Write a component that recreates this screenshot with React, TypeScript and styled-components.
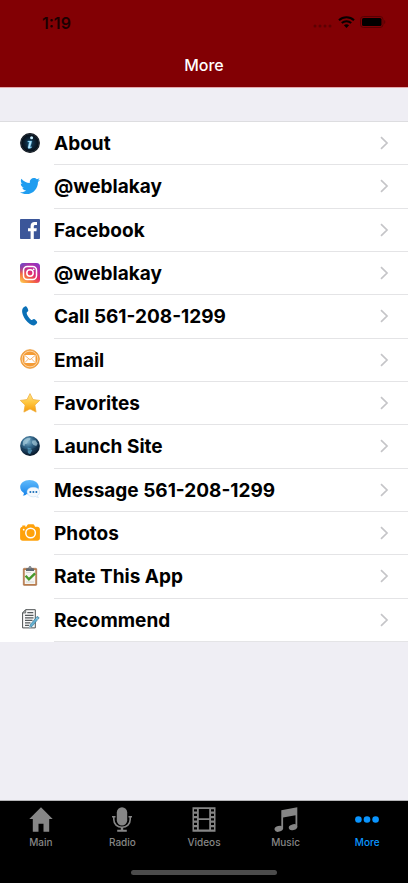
import React from 'react';
import styled, { createGlobalStyle } from 'styled-components';
import { FaTwitter } from 'react-icons/fa';

const GlobalStyle = createGlobalStyle`
  * { box-sizing: border-box; }
  body {
    margin: 0;
    background: #efeef4;
    font-family: Inter, "Liberation Sans", sans-serif;
    color: #000;
  }
`;

const Screen = styled.div`
  min-height: 100vh;
  display: flex;
  flex-direction: column;
  background: #efeef4;
`;

const Header = styled.header`
  background: #820004;
  border-bottom: 1px solid #e3a9ad;
`;

const StatusBar = styled.div`
  display: flex;
  align-items: center;
  justify-content: space-between;
  height: 44px;
  padding: 0 22px 0 42px;
`;

const Clock = styled.time`
  padding-top: 2px;
  font-size: 16px;
  line-height: 20px;
  font-weight: 600;
  color: #1c0001;
`;

const StatusIcons = styled.div`
  display: flex;
  align-items: center;
  gap: 5px;
  svg { display: block; }
`;

const Title = styled.h1`
  margin: 0;
  padding: 10px 0 11px;
  font-size: 16px;
  line-height: 22px;
  font-weight: 500;
  text-align: center;
  color: #fff;
`;

const Content = styled.main`
  flex: 1;
  padding-top: 33px;
`;

const List = styled.ul`
  margin: 0;
  padding: 0;
  list-style: none;
  display: grid;
  grid-auto-rows: 1fr;
  min-height: 521px;
  background: #fff;
  border-top: 1px solid #dddde0;
`;

const Item = styled.li`
  display: flex;
`;

const RowLink = styled.a`
  flex: 1;
  display: flex;
  align-items: stretch;
  gap: 14px;
  padding-left: 20px;
  color: inherit;
  text-decoration: none;
`;

const IconBox = styled.span`
  display: flex;
  align-items: center;
  padding-bottom: 2px;
  svg { display: block; }
`;

const RowBody = styled.span`
  flex: 1;
  display: flex;
  align-items: center;
  justify-content: space-between;
  padding-right: 19px;
  border-bottom: 1px solid #e4e4e6;
`;

const RowLabel = styled.span`
  padding-top: 2px;
  font-size: 19px;
  line-height: 24px;
  font-weight: 700;
`;

const TabBar = styled.footer`
  background: #000;
  border-top: 1px solid #b5b5b8;
`;

const Tabs = styled.nav`
  display: grid;
  grid-template-columns: repeat(5, 1fr);
  padding-top: 6px;
`;

const Tab = styled.button<{ $active?: boolean }>`
  display: flex;
  flex-direction: column;
  align-items: center;
  gap: 3px;
  margin: 0;
  padding: 0;
  border: 0;
  background: none;
  font: inherit;
  font-size: 10px;
  line-height: 14px;
  font-weight: 500;
  color: ${(p) => (p.$active ? '#0a95ff' : '#868686')};
  svg { display: block; }
`;

const HomeIndicator = styled.div`
  width: 146px;
  height: 5px;
  margin: 21px auto 8px;
  border-radius: 3px;
  background: #4b4b4b;
`;

const InfoIcon = () => (
  <svg width="20" height="20" viewBox="0 0 20 20">
    <defs>
      <radialGradient id="info" cx=".5" cy=".5" r=".5">
        <stop offset="0" stopColor="#164765" />
        <stop offset=".55" stopColor="#0b1f30" />
        <stop offset="1" stopColor="#05080d" />
      </radialGradient>
    </defs>
    <circle cx="10" cy="10" r="9.9" fill="url(#info)" />
    <circle cx="10" cy="10" r="9" fill="none" stroke="#40515e" strokeWidth=".5" />
    <circle cx="11.6" cy="4.8" r="1.5" fill="#c9efff" />
    <path d="M8 8.100h3.900l-1.700 6.200 1.600-.6-.3.900c-1.300 1-3.900 1.600-3.500-.6L9.300 9H7.700z" fill="#b9e6fb" stroke="#4fb4e2" strokeWidth=".4" />
  </svg>
);

const FacebookIcon = () => (
  <svg width="20" height="20" viewBox="0 0 20 20">
    <rect width="20" height="20" rx=".8" fill="#3b5699" />
    <path d="M10.600 20v-7.700H8V9.200h2.600V7c0-2.700 1.600-4 4-4l2.400.1V6h-1.600c-1.300 0-1.600.6-1.600 1.500v1.700h3l-.4 3.100h-2.600V20z" fill="#fff" />
  </svg>
);

const InstagramIcon = () => (
  <svg width="20" height="20" viewBox="0 0 20 20">
    <defs>
      <linearGradient id="ig" x1=".15" y1="1" x2=".85" y2="0">
        <stop offset="0" stopColor="#fdc34f" />
        <stop offset=".25" stopColor="#f6733f" />
        <stop offset=".52" stopColor="#e12a6f" />
        <stop offset=".78" stopColor="#b42ea6" />
        <stop offset="1" stopColor="#8a36c4" />
      </linearGradient>
      <radialGradient id="igCorner" cx="0" cy="0" r=".55">
        <stop offset="0" stopColor="#5a4fd6" />
        <stop offset="1" stopColor="#5a4fd6" stopOpacity="0" />
      </radialGradient>
    </defs>
    <rect width="20" height="20" rx="3.5" fill="url(#ig)" />
    <rect width="20" height="20" rx="3.5" fill="url(#igCorner)" />
    <g fill="none" stroke="#fff" strokeWidth="1.5">
      <rect x="3.5" y="3.5" width="13" height="13" rx="3.8" />
      <circle cx="10" cy="10" r="3.2" />
    </g>
    <circle cx="13.700" cy="6.300" r=".9" fill="#fff" />
  </svg>
);

const PhoneIcon = () => (
  <svg width="20" height="20" viewBox="0 0 20 20">
    <path d="M3.300 1.800C4.300.8 5.500.2 6.300.400c.9.500 1.900 2.800 2 4 .1.900-1.900 1.700-1.700 2.700.5 2.500 2.500 5.400 4.600 6.900.9.500 2-1.300 2.900-.9 1.200.5 2.900 2.200 3.100 3.200.1 1-1.700 2.900-3.300 3.100-2.400.2-6-2.400-8.200-5.300C3.400 11 1.500 6.500 2.300 3.600c.2-.8.500-1.300 1-1.800z" fill="#0a70b7" />
  </svg>
);

const EmailIcon = () => (
  <svg width="20" height="20" viewBox="0 0 20 20">
    <circle cx="10" cy="10" r="9.300" fill="#f49b35" stroke="#eda044" />
    <circle cx="10" cy="10" r="7.900" fill="none" stroke="#ffe4c0" strokeWidth=".8" />
    <rect x="4.500" y="6" width="11" height="8" rx=".6" fill="#fff" />
    <path d="M4.800 6.400 10 10.800l5.200-4.400M4.800 13.700l3.700-3.900m6.700 3.900-3.700-3.900" fill="none" stroke="#f0a04b" strokeWidth=".8" />
  </svg>
);

const StarIcon = () => (
  <svg width="20" height="20" viewBox="0 0 20 20">
    <defs>
      <linearGradient id="star" x1="0" y1="0" x2="0" y2="1">
        <stop offset="0" stopColor="#ffe48a" />
        <stop offset=".5" stopColor="#ffc53d" />
        <stop offset="1" stopColor="#f59a0c" />
      </linearGradient>
    </defs>
    <path d="m10 .6 3 5.900 6.700.900-4.800 4.700 1.200 7-6.100-3.200L3.900 19.100l1.200-7L.3 7.400 7 6.500z" fill="url(#star)" stroke="#eeab37" strokeWidth=".7" strokeLinejoin="round" />
  </svg>
);

const GlobeIcon = () => (
  <svg width="20" height="20" viewBox="0 0 20 20">
    <defs>
      <radialGradient id="globe" cx=".4" cy=".28" r=".7">
        <stop offset="0" stopColor="#83b4cd" />
        <stop offset=".4" stopColor="#35698c" />
        <stop offset=".8" stopColor="#12304b" />
        <stop offset="1" stopColor="#0a1a2b" />
      </radialGradient>
    </defs>
    <circle cx="10" cy="10" r="9.900" fill="url(#globe)" />
    <path d="M3 5.500C4.800 2.700 8 1.400 10.600 2l-.7 2.200-2.100.8-.6 2.500-2.300.7-.5 2-1.700-1.300zM12.300 4.500l3.200-.3 2.200 3.500-1.500 2.300-2.700-.9-1.500-2z" fill="#b2d5e4" opacity=".65" />
    <path d="m7.500 11.500 3.600 1 1 2-2 3.700-2.200-1.300z" fill="#5ba4c6" opacity=".75" />
    <path d="M1.400 11.500c2.200 3.200 10.400 3.800 17.200-1.100" fill="none" stroke="#071a2b" strokeWidth=".6" opacity=".5" />
  </svg>
);

const MessageIcon = () => (
  <svg width="20" height="20" viewBox="0 0 20 20">
    <defs>
      <linearGradient id="bubble" x1="0" y1="0" x2="0" y2="1">
        <stop offset="0" stopColor="#61bbfb" />
        <stop offset="1" stopColor="#1683ea" />
      </linearGradient>
    </defs>
    <path d="M9.500 1C14.600 1 18.800 4 18.800 8s-4.200 7.300-9.300 7.300c-1 0-1.900-.1-2.800-.3-1 1-2.500 1.700-4.100 1.600.9-.7 1.300-1.600 1.300-2.700C1.600 12.600.2 10.500.2 8c0-4 4.200-7 9.300-7z" fill="url(#bubble)" />
    <path d="M13.300 8.300c3.600 0 6.400 2 6.400 4.700 0 1.500-.9 2.800-2.200 3.700.1.800.5 1.300 1 1.800-1.200 0-2.200-.4-2.900-1-.7.200-1.500.3-2.300.3-3.500 0-6.300-2.100-6.300-4.800s2.800-4.700 6.300-4.700z" fill="#f5f9fd" stroke="#a8cff0" strokeWidth=".4" />
    <g fill="#176eb9"><circle cx="10.400" cy="13" r="1" /><circle cx="13.400" cy="13" r="1" /><circle cx="16.400" cy="13" r="1" /></g>
  </svg>
);

const CameraIcon = () => (
  <svg width="20" height="20" viewBox="0 0 20 20">
    <path d="M2.300 2.600h3v1.100h1l1-1.700c.3-.5.700-.7 1.200-.7h4.600c.5 0 .9.300 1.100.7l.9 1.700h2.200c1.500 0 2.600 1.100 2.600 2.600v8.900c0 1.500-1.100 2.500-2.600 2.500H2.700C1.200 17.700.1 16.700.1 15.200V6.300c0-1.300.9-2.300 2.200-2.600z" fill="#ffa20b" />
    <circle cx="10.600" cy="10" r="4.800" fill="none" stroke="#fff" strokeWidth="1.500" />
    <circle cx="3.700" cy="6.700" r=".9" fill="#fff" />
  </svg>
);

const ClipboardIcon = () => (
  <svg width="20" height="20" viewBox="0 0 20 20">
    <rect x="3.200" y="2.200" width="13.600" height="17.300" rx="1" fill="#b97b4a" stroke="#94603a" strokeWidth=".4" />
    <path d="M4.700 4h10.600v14H4.700z" fill="#f5f5f2" />
    <path d="M6 4.900V3.100c0-.6.500-.9 1-.9h1.500C8.500.7 9 .3 10 .3s1.500.4 1.500 1.900H13c.5 0 1 .3 1 .9v1.800z" fill="#606970" />
    <circle cx="10" cy="1.800" r=".6" fill="#dce1e4" />
    <path d="m5.600 9.800 3.300 3.500 6.200-6" fill="none" stroke="#46992b" strokeWidth="2.400" />
    <path d="M6 16h8M6 6.500h5" stroke="#c8ccce" strokeWidth=".7" />
  </svg>
);

const DocumentIcon = () => (
  <svg width="20" height="20" viewBox="0 0 20 20">
    <path d="M5.700.7h9.600v18.200H2.600V4z" fill="#fafafa" stroke="#4d5152" strokeWidth="1" strokeLinejoin="round" />
    <path d="M5.700.7V4H2.600z" fill="#b9bdbf" stroke="#4d5152" strokeWidth=".7" />
    <path d="M7.300 3.700h6M5 6.400h8.500M5 8.900h8.500M5 11.400h7.500M5 13.900h5.500M5 16.400h4" stroke="#555a5c" strokeWidth="1.200" />
    <path d="m17.200 7.300 2 1.500-7 8.500-2.800 1.700.7-3.200z" fill="#64b1d2" stroke="#34708d" strokeWidth=".6" strokeLinejoin="round" />
    <path d="m16.100 9 1.900 1.500M9.400 19l.3-1.500 1 .8z" stroke="#e8f7fd" strokeWidth=".5" fill="#263c47" />
  </svg>
);

const Chevron = () => (
  <svg width="10" height="14" viewBox="0 0 10 14" aria-hidden="true">
    <path d="m2 1.200 6 5.800-6 5.800" fill="none" stroke="#c5c5c8" strokeWidth="1.700" />
  </svg>
);

const HomeTabIcon = () => (
  <svg width="24" height="25" viewBox="0 0 24 25" fill="currentColor">
    <path d="M12 .3 23.700 12h-3.500v12.700h-5.700v-8h-5v8H3.800V12H.3z" />
  </svg>
);

const MicTabIcon = () => (
  <svg width="24" height="25" viewBox="0 0 24 25" fill="currentColor">
    <rect x="6.800" y=".2" width="10.400" height="18.300" rx="5.200" />
    <path d="M3.800 9.300v3.200c0 4.600 3.400 7.800 8.200 7.800s8.200-3.200 8.200-7.800V9.300M2 9.800h3.500M18.500 9.800H22" fill="none" stroke="currentColor" strokeWidth="1.600" />
    <path d="M10.800 20h2.400v2.800h3.600v1.900H7.200v-1.900h3.600z" />
  </svg>
);

const FilmTabIcon = () => (
  <svg width="24" height="25" viewBox="0 0 24 25" fill="currentColor">
    <path fillRule="evenodd" d="M.5.200h23v24.600H.5zM6.800 2v9.200h10.400V2zm0 11.100v9.300h10.400v-9.300zM2 2.200v2.400h3V2.200zm0 4.500v2.400h3V6.700zm0 4.500v2.400h3v-2.400zm0 4.500v2.400h3v-2.400zm0 4.500v2.400h3v-2.400zM19 2.200v2.400h3V2.200zm0 4.500v2.400h3V6.700zm0 4.500v2.400h3v-2.400zm0 4.500v2.400h3v-2.400zm0 4.500v2.400h3v-2.400z" />
  </svg>
);

const MusicTabIcon = () => (
  <svg width="24" height="25" viewBox="0 0 24 25" fill="currentColor">
    <path d="M7.300 3.200 23.300.200v20H21.500V8.300L9.100 10.600v11.200H7.300z" />
    <ellipse cx="4.800" cy="21.800" rx="4.300" ry="2.900" transform="rotate(-14 4.800 21.800)" />
    <ellipse cx="19" cy="20.200" rx="4.300" ry="2.900" transform="rotate(-14 19 20.200)" />
  </svg>
);

const MoreTabIcon = () => (
  <svg width="24" height="25" viewBox="0 0 24 25" fill="currentColor">
    <circle cx="3.400" cy="12.500" r="3.300" />
    <circle cx="12" cy="12.500" r="3.300" />
    <circle cx="20.600" cy="12.500" r="3.300" />
  </svg>
);

const rows = [
  { label: 'About', icon: <InfoIcon /> },
  { label: '@weblakay', icon: <FaTwitter size={20} color="#1f9df0" /> },
  { label: 'Facebook', icon: <FacebookIcon /> },
  { label: '@weblakay', icon: <InstagramIcon /> },
  { label: 'Call 561-208-1299', icon: <PhoneIcon />, href: 'tel:561-208-1299' },
  { label: 'Email', icon: <EmailIcon /> },
  { label: 'Favorites', icon: <StarIcon /> },
  { label: 'Launch Site', icon: <GlobeIcon /> },
  { label: 'Message 561-208-1299', icon: <MessageIcon />, href: 'sms:561-208-1299' },
  { label: 'Photos', icon: <CameraIcon /> },
  { label: 'Rate This App', icon: <ClipboardIcon /> },
  { label: 'Recommend', icon: <DocumentIcon /> },
];

const tabs = [
  { label: 'Main', icon: <HomeTabIcon /> },
  { label: 'Radio', icon: <MicTabIcon /> },
  { label: 'Videos', icon: <FilmTabIcon /> },
  { label: 'Music', icon: <MusicTabIcon /> },
  { label: 'More', icon: <MoreTabIcon />, active: true },
];

export default function App() {
  return (
    <Screen>
      <GlobalStyle />
      <Header>
        <StatusBar>
          <Clock>1:19</Clock>
          <StatusIcons>
            <svg width="20" height="12" viewBox="0 0 20 12" fill="#5d0003">
              <circle cx="2" cy="10" r="1.500" />
              <circle cx="7" cy="10" r="1.500" />
              <circle cx="12" cy="10" r="1.500" />
              <circle cx="17" cy="10" r="1.500" />
            </svg>
            <svg width="17" height="12" viewBox="0 0 17 12">
              <path d="M1 4.300c4.200-4 10.800-4 15 0M3.800 7.100c2.700-2.500 6.700-2.500 9.400 0" fill="none" stroke="#080000" strokeWidth="2.100" />
              <path d="M5.900 9.200c1.500-1.400 3.700-1.400 5.200 0L8.500 11.900z" fill="#080000" />
            </svg>
            <svg width="26" height="12" viewBox="0 0 26 12">
              <rect x=".5" y=".5" width="22.500" height="11" rx="3" fill="none" stroke="#570003" />
              <rect x="2" y="2" width="19.500" height="8" rx="1.500" fill="#000" />
              <path d="M24.200 4v4c1.500-.6 1.500-3.400 0-4z" fill="#570003" />
            </svg>
          </StatusIcons>
        </StatusBar>
        <Title>More</Title>
      </Header>
      <Content>
        <List>
          {rows.map((row, i) => (
            <Item key={i}>
              <RowLink href={row.href ?? '#'}>
                <IconBox aria-hidden="true">{row.icon}</IconBox>
                <RowBody>
                  <RowLabel>{row.label}</RowLabel>
                  <Chevron />
                </RowBody>
              </RowLink>
            </Item>
          ))}
        </List>
      </Content>
      <TabBar>
        <Tabs>
          {tabs.map((tab) => (
            <Tab key={tab.label} type="button" $active={tab.active} aria-current={tab.active ? 'page' : undefined}>
              {tab.icon}
              {tab.label}
            </Tab>
          ))}
        </Tabs>
        <HomeIndicator />
      </TabBar>
    </Screen>
  );
}
